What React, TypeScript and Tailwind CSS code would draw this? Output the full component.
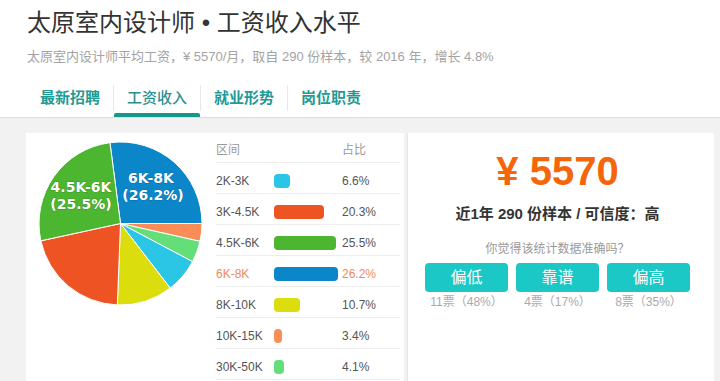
const font = '[font-family:"Liberation_Sans","Noto_Sans_CJK_SC",sans-serif]'

const slices = [
  { label: '6K-8K', pct: 26.2, color: '#0b87c9' },
  { label: '10K-15K', pct: 3.4, color: '#f98c57' },
  { label: '30K-50K', pct: 4.1, color: '#63de79' },
  { label: '2K-3K', pct: 6.6, color: '#2bc5e6' },
  { label: '8K-10K', pct: 10.7, color: '#dcdd0c' },
  { label: '3K-4.5K', pct: 20.3, color: '#ee5423' },
  { label: '4.5K-6K', pct: 25.5, color: '#4cb631' },
]

const rows = ['2K-3K', '3K-4.5K', '4.5K-6K', '6K-8K', '8K-10K', '10K-15K', '30K-50K']

const tabs = ['最新招聘', '工资收入', '就业形势', '岗位职责']

const votes = [
  { text: '偏低', count: '11票（48%）' },
  { text: '靠谱', count: '4票（17%）' },
  { text: '偏高', count: '8票（35%）' },
]

function Pie() {
  const cx = 94.5
  const cy = 90.5
  const r = 81.5
  const total = slices.reduce((s, x) => s + x.pct, 0)
  let angle = 90 - (slices[0].pct / total) * 360
  const pt = (a: number) => {
    const rad = (a * Math.PI) / 180
    return [cx + r * Math.sin(rad), cy - r * Math.cos(rad)]
  }
  return (
    <svg width="190" height="200" viewBox="0 0 190 200" className="shrink-0">
      {slices.map((s) => {
        const sweep = (s.pct / total) * 360
        const [x1, y1] = pt(angle)
        const [x2, y2] = pt(angle + sweep)
        angle += sweep
        const d = `M${cx},${cy} L${x1},${y1} A${r},${r} 0 ${sweep > 180 ? 1 : 0} 1 ${x2},${y2} Z`
        return <path key={s.label} d={d} fill={s.color} stroke="#fff" strokeWidth="1" strokeLinejoin="round" />
      })}
      <g
        fill="#fff"
        fontFamily="DejaVu Sans, sans-serif"
        fontWeight="bold"
        fontSize="14"
        textAnchor="middle"
        stroke="rgba(0,0,0,0.2)"
        strokeWidth="1"
        paintOrder="stroke"
      >
        <text x="125" y="50">6K-8K</text>
        <text x="127" y="67">(26.2%)</text>
        <text x="55" y="59">4.5K-6K</text>
        <text x="55" y="76">(25.5%)</text>
      </g>
    </svg>
  )
}

export default function App() {
  return (
    <div className={`h-[381px] w-[720px] overflow-hidden bg-[#f2f2f2] ${font}`}>
      {/* Header */}
      <div className="border-b border-[#dcdcdc] bg-white pl-[27px] pt-[7px]">
        <h1 className="text-[24px] leading-[32px] text-[#333]">太原室内设计师 • 工资收入水平</h1>
        <p className="mt-[8px] text-[13px] leading-[20px] text-[#a3a3a3]">
          太原室内设计师平均工资，¥ 5570/月，取自 290 份样本，较 2016 年，增长 4.8%
        </p>
        <div className="mt-[12px] flex h-[38px] items-center">
          {tabs.map((t, i) => (
            <div key={t} className="flex h-full items-center">
              {i > 0 && <span className="h-[26px] w-px bg-[#e8e8e8]" />}
              <div
                className={`relative flex h-full items-center px-[13px] pt-[1px] text-[15px] ${
                  i === 1 ? 'font-medium text-[#2b8f8c]' : 'font-bold text-[#1f9a94]'
                }`}
              >
                {t}
                {i === 1 && <span className="absolute inset-x-0 bottom-0 h-[4px] rounded-t-[2px] bg-[#14988b]" />}
              </div>
            </div>
          ))}
        </div>
      </div>

      {/* Body */}
      <div className="flex pt-[15px]">
        <div className="ml-[26px] flex h-[260px] w-[378px] bg-white">
          <Pie />
          <div className="w-[184px] pt-[4px] text-[12px]">
            <div className="flex h-[26px] items-center border-b border-[#eeeeee] text-[#9a9a9a]">
              <span className="w-[126px]">区间</span>
              <span>占比</span>
            </div>
            {rows.map((label) => {
              const s = slices.find((x) => x.label === label)!
              const hi = label === '6K-8K'
              return (
                <div
                  key={label}
                  className={`flex h-[31px] items-center border-b border-[#eeeeee] pt-[6px] ${
                    hi ? 'text-[#f08a5b]' : 'text-[#555]'
                  }`}
                >
                  <span className="w-[58px]">{label}</span>
                  <span className="w-[68px]">
                    <span
                      className="block h-[14px] rounded-[4px]"
                      style={{ width: Math.max(8, s.pct * 2.45), backgroundColor: s.color }}
                    />
                  </span>
                  <span>{s.pct}%</span>
                </div>
              )
            })}
          </div>
        </div>

        <div className="ml-[3px] flex h-[260px] w-[307px] flex-col items-center border-l border-[#e6e6e6] bg-white pr-[7px] pt-[14px]">
          <div className="text-[40px] font-bold leading-[48px] text-[#f5650a]">¥ 5570</div>
          <div className="mt-[8px] text-[15px] font-bold leading-[22px] text-[#333]">
            近1年 290 份样本 / 可信度：高
          </div>
          <div className="mt-[15px] text-[12px] leading-[18px] text-[#9a9a9a]">你觉得该统计数据准确吗？</div>
          <div className="mt-[5px] flex gap-2">
            {votes.map((v) => (
              <div key={v.text} className="flex w-[83px] flex-col items-center">
                <div className="flex h-[29px] w-full items-center justify-center rounded-[4px] bg-[#1cc8c6] text-[16px] text-white">
                  {v.text}
                </div>
                <div className="mt-[2px] text-[12px] leading-[16px] text-[#aaa]">{v.count}</div>
              </div>
            ))}
          </div>
        </div>
      </div>
    </div>
  )
}
